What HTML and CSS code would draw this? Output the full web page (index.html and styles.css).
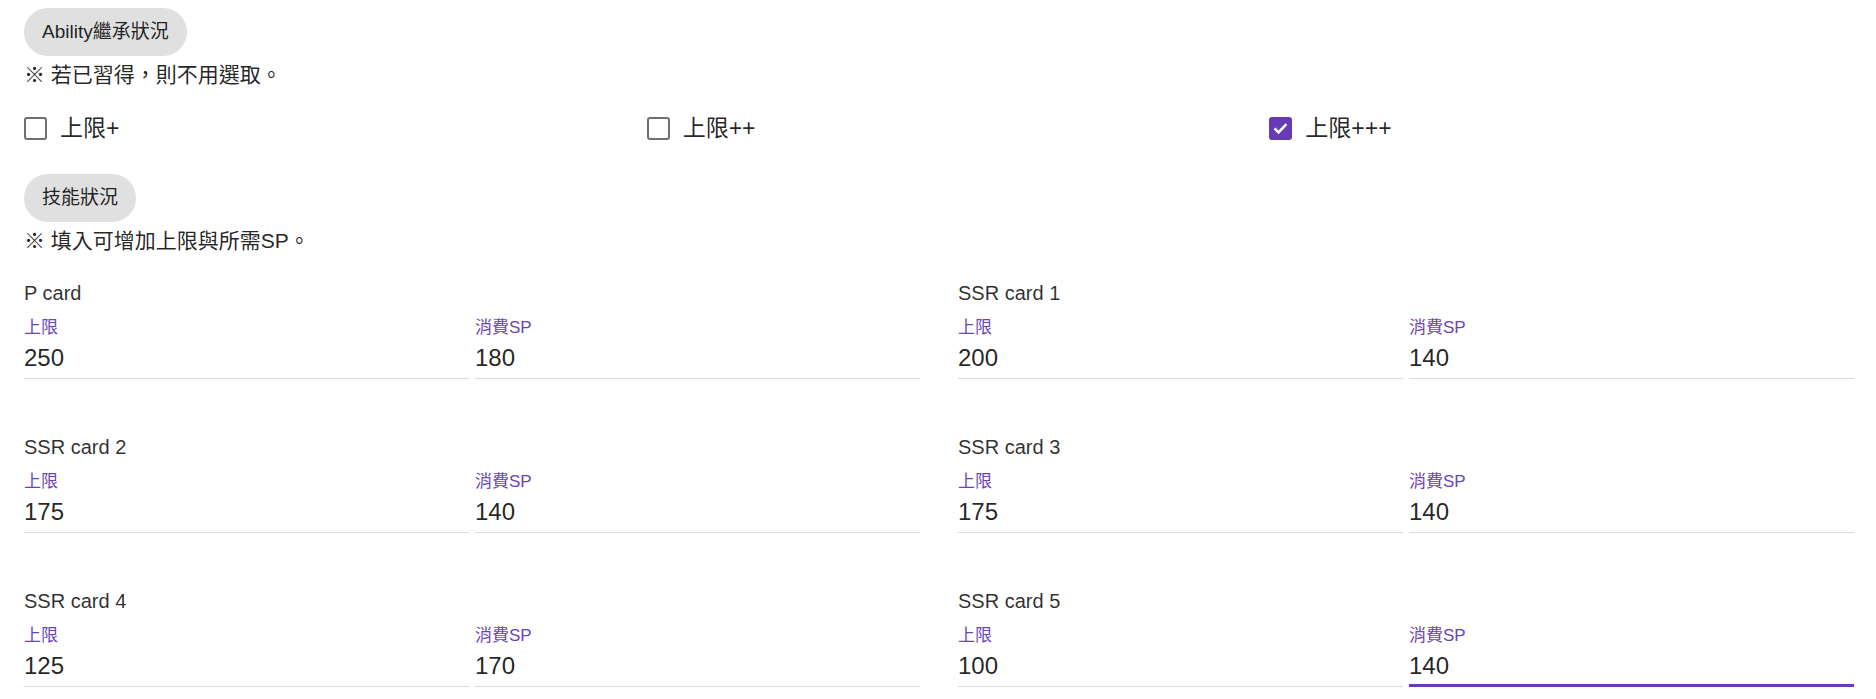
FILE: index.html
```html
<!DOCTYPE html>
<html lang="zh-Hant">
<head>
<meta charset="utf-8">
<title>Ability</title>
<link rel="stylesheet" href="styles.css">
</head>
<body>
<main class="page">
  <section class="block">
    <span class="chip">Ability繼承狀況</span>
    <p class="note">※ 若已習得，則不用選取。</p>
    <div class="checks">
      <label class="check"><span class="box"></span><span class="check-label">上限+</span></label>
      <label class="check"><span class="box"></span><span class="check-label">上限++</span></label>
      <label class="check"><span class="box checked"><svg viewBox="0 0 24 24" width="20" height="20"><polyline points="4.5,12.5 9.5,17.5 19.5,7" fill="none" stroke="#fff" stroke-width="3.2"/></svg></span><span class="check-label">上限+++</span></label>
    </div>
  </section>
  <section class="block skills">
    <span class="chip">技能狀況</span>
    <p class="note">※ 填入可增加上限與所需SP。</p>
    <div class="cards">
      <div class="card">
        <div class="card-title">P card</div>
        <div class="fields">
          <div class="field"><span class="field-label">上限</span><span class="field-value">250</span></div>
          <div class="field"><span class="field-label">消費SP</span><span class="field-value">180</span></div>
        </div>
      </div>
      <div class="card">
        <div class="card-title">SSR card 1</div>
        <div class="fields">
          <div class="field"><span class="field-label">上限</span><span class="field-value">200</span></div>
          <div class="field"><span class="field-label">消費SP</span><span class="field-value">140</span></div>
        </div>
      </div>
      <div class="card">
        <div class="card-title">SSR card 2</div>
        <div class="fields">
          <div class="field"><span class="field-label">上限</span><span class="field-value">175</span></div>
          <div class="field"><span class="field-label">消費SP</span><span class="field-value">140</span></div>
        </div>
      </div>
      <div class="card">
        <div class="card-title">SSR card 3</div>
        <div class="fields">
          <div class="field"><span class="field-label">上限</span><span class="field-value">175</span></div>
          <div class="field"><span class="field-label">消費SP</span><span class="field-value">140</span></div>
        </div>
      </div>
      <div class="card">
        <div class="card-title">SSR card 4</div>
        <div class="fields">
          <div class="field"><span class="field-label">上限</span><span class="field-value">125</span></div>
          <div class="field"><span class="field-label">消費SP</span><span class="field-value">170</span></div>
        </div>
      </div>
      <div class="card">
        <div class="card-title">SSR card 5</div>
        <div class="fields">
          <div class="field"><span class="field-label">上限</span><span class="field-value">100</span></div>
          <div class="field focused"><span class="field-label">消費SP</span><span class="field-value">140</span></div>
        </div>
      </div>
    </div>
  </section>
</main>
</body>
</html>
```
FILE: styles.css
```css
* { box-sizing: border-box; }
html, body { margin: 0; padding: 0; background: #fff; }
body {
  font-family: "Liberation Sans", Arial, "Noto Sans CJK TC", sans-serif;
  color: rgba(0, 0, 0, 0.87);
  overflow: hidden;
}
.page {
  padding: 8px 22px 0 24px;
}
.block {
  display: flex;
  flex-direction: column;
  align-items: flex-start;
}
.skills { margin-top: 26px; }
.chip {
  display: inline-flex;
  align-items: center;
  height: 48px;
  padding: 0 18px;
  border-radius: 24px;
  background: #e0e0e0;
  font-size: 19px;
  line-height: 24px;
  color: rgba(0, 0, 0, 0.87);
}
.note {
  margin: 5px 0 0;
  font-size: 21px;
  line-height: 28px;
  color: rgba(0, 0, 0, 0.87);
}
.checks {
  align-self: stretch;
  margin-top: 19px;
  display: grid;
  grid-template-columns: repeat(3, 1fr);
  column-gap: 38px;
  height: 40px;
  align-items: center;
}
.check {
  display: flex;
  align-items: center;
  gap: 13px;
}
.box {
  width: 23px;
  height: 23px;
  border: 2px solid #6f6f6f;
  border-radius: 3px;
  display: flex;
  align-items: center;
  justify-content: center;
}
.box.checked {
  background: #673ab7;
  border-color: #673ab7;
}
.check-label {
  font-size: 23px;
  line-height: 28px;
  color: rgba(0, 0, 0, 0.87);
}
.cards {
  align-self: stretch;
  margin-top: 26px;
  display: grid;
  grid-template-columns: 1fr 1fr;
  column-gap: 38px;
  row-gap: 56px;
}
.card-title {
  font-size: 20px;
  line-height: 24px;
  color: rgba(0, 0, 0, 0.82);
}
.fields {
  margin-top: 13px;
  display: grid;
  grid-template-columns: 1fr 1fr;
  column-gap: 6px;
}
.field {
  display: flex;
  flex-direction: column;
  padding-bottom: 5px;
  border-bottom: 1px solid #dcdcdc;
}
.field.focused {
  border-bottom-color: #673ab7;
  box-shadow: inset 0 -2px 0 #673ab7;
}
.field-label {
  font-size: 17px;
  line-height: 20px;
  color: #6a45b8;
}
.field-value {
  margin-top: 5px;
  font-size: 24px;
  line-height: 30px;
  color: rgba(0, 0, 0, 0.87);
}
```
